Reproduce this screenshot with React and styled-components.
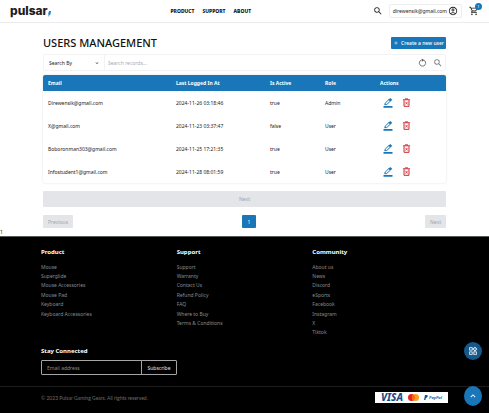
import React, { useState } from "react";
import styled, { createGlobalStyle } from "styled-components";
import {
  MdSearch,
  MdOutlineAccountCircle,
  MdOutlineShoppingCart,
  MdAdd,
  MdKeyboardArrowDown,
  MdKeyboardArrowUp,
  MdOutlineWidgets,
} from "react-icons/md";

const blue = "#1976b8";

const GlobalStyle = createGlobalStyle`
  *, *::before, *::after { box-sizing: border-box; }
  body {
    margin: 0;
    background: #fff;
    color: #222;
    font-family: "Noto Sans", "Open Sans", sans-serif;
    font-size: 5px;
    line-height: 8px;
  }
  button, input, select { font: inherit; color: inherit; margin: 0; }
  button { cursor: pointer; }
  a { color: inherit; text-decoration: none; }
`;

const Header = styled.header`
  display: grid;
  grid-template-columns: 34% auto 1fr;
  align-items: center;
  height: 23px;
  padding: 0 10px;
  border-bottom: 1px solid #ececee;
`;

const Logo = styled.a`
  display: flex;
  align-items: center;
  color: #231c1e;
  font-family: Inter, sans-serif;
  font-size: 12px;
  font-weight: 800;
  line-height: 20px;

  svg { width: 3px; height: 6px; margin-top: 5px; }
`;

const Nav = styled.nav`
  display: flex;
  gap: 8px;
  padding-left: 1px;
  color: #111;
  font-weight: 800;
`;

const HeaderTools = styled.div`
  display: flex;
  align-items: center;
  justify-content: flex-end;
  color: #222;
`;

const IconButton = styled.button`
  display: flex;
  align-items: center;
  justify-content: center;
  position: relative;
  padding: 0;
  border: 0;
  background: none;
  color: ${(p) => p.$color || "#222"};

  svg { width: ${(p) => p.$size || 10}px; height: ${(p) => p.$size || 10}px; }
`;

const Account = styled.button`
  display: flex;
  align-items: center;
  gap: 1px;
  height: 14px;
  margin: 0 7px 0 6px;
  padding: 0 3px;
  border: 1px solid #eeeef0;
  border-radius: 2px;
  background: #fff;

  svg { width: 10px; height: 10px; }
`;

const Badge = styled.span`
  position: absolute;
  top: -3px;
  right: -3px;
  width: 7px;
  height: 7px;
  border-radius: 50%;
  background: ${blue};
  color: #fff;
  font-size: 4px;
  line-height: 7px;
  text-align: center;
`;

const Main = styled.main`
  padding: 14px 43px 8px;
`;

const TitleRow = styled.div`
  display: flex;
  align-items: center;
  justify-content: space-between;
  height: 12px;
`;

const Title = styled.h1`
  margin: 0;
  color: #111;
  font-size: 11px;
  font-weight: 500;
  line-height: 14px;
`;

const CreateButton = styled.button`
  display: flex;
  align-items: center;
  gap: 2px;
  height: 12px;
  padding: 0 2px;
  border: 0;
  border-radius: 1px;
  background: ${blue};
  color: #fff;
  font-weight: 500;

  svg { width: 6px; height: 6px; }
`;

const SearchBar = styled.form`
  display: flex;
  align-items: center;
  height: 17px;
  margin: 5px 0 4px;
  border: 1px solid #f3f3f5;
  border-radius: 2px;
`;

const SelectBox = styled.div`
  display: flex;
  align-items: center;
  width: 61px;
  height: 100%;
  padding: 0 4px 0 5px;
  border-right: 1px solid #f3f3f5;

  svg { width: 6px; height: 6px; flex: none; }
`;

const Select = styled.select`
  flex: 1;
  min-width: 0;
  padding: 0;
  border: 0;
  background: none;
  appearance: none;
`;

const SearchInput = styled.input`
  flex: 1;
  min-width: 0;
  padding: 0 3px;
  border: 0;
  background: none;

  &::placeholder { color: #a9acb3; opacity: 1; }
`;

const SearchActions = styled.div`
  display: flex;
  gap: 6px;
  padding-right: 2px;
`;

const TableCard = styled.div`
  border-radius: 2px;
  box-shadow: 0 0 2px rgba(0, 0, 0, 0.16);
  overflow: hidden;
`;

const Table = styled.table`
  width: 100%;
  border-collapse: collapse;
  table-layout: fixed;
`;

const HeadCell = styled.th`
  width: ${(p) => p.$width};
  height: 16px;
  padding: 0 0 0 5px;
  background: ${blue};
  color: #fff;
  font-weight: 700;
  text-align: left;
`;

const Cell = styled.td`
  height: 23px;
  padding: 0 0 0 5px;
`;

const RowActions = styled.div`
  display: flex;
  gap: 9px;
  padding-left: 3px;
`;

const NextBar = styled.button`
  display: block;
  width: 100%;
  height: 16px;
  margin: 8px 0;
  border: 0;
  border-radius: 1px;
  background: #e4e5e9;
  color: #a2a4aa;
`;

const Pagination = styled.nav`
  display: flex;
  justify-content: space-between;
`;

const PageButton = styled.button`
  min-width: 14px;
  height: 13px;
  padding: 0 5px;
  border: 0;
  border-radius: 1px;
  background: ${(p) => (p.$current ? blue : "#e4e5e9")};
  color: ${(p) => (p.$current ? "#fff" : "#a2a4aa")};
`;

const PageCount = styled.p`
  margin: -8px 0 0;
`;

const Footer = styled.footer`
  border-top: 1px solid #555b58;
  background: #000;
  color: #8b8b8b;
`;

const FooterTop = styled.div`
  padding: 11px 41px 10px;
  border-bottom: 1px solid #1c1c1c;
`;

const LinkColumns = styled.div`
  display: grid;
  grid-template-columns: repeat(3, 1fr);
  margin-bottom: 10px;
`;

const FooterHeading = styled.h2`
  margin: 0;
  color: #fff;
  font-size: 6px;
  font-weight: 700;
  line-height: 9px;
`;

const LinkList = styled.ul`
  display: grid;
  grid-template-rows: repeat(8, 1fr);
  align-items: center;
  height: 75px;
  margin: 5px 0 0;
  padding: 0;
  list-style: none;
`;

const Newsletter = styled.form`
  display: flex;
  width: 33%;
  min-width: 136px;
  height: 15px;
  margin-top: 4px;
  margin-bottom: 1px;
  border: 1px solid #a5a5a5;
  border-radius: 1px;
`;

const EmailInput = styled.input`
  flex: 1;
  min-width: 0;
  padding: 0 5px;
  border: 0;
  background: none;

  &::placeholder { color: #8b8b8b; opacity: 1; }
`;

const Subscribe = styled.button`
  width: 35px;
  padding: 0;
  border: 0;
  border-left: 1px solid #a5a5a5;
  background: none;
  color: #e4e4e4;
`;

const FooterBottom = styled.div`
  display: flex;
  align-items: center;
  justify-content: space-between;
  height: 26px;
  padding: 0 41px 5px;
  color: #6d6d6d;
`;

const Copyright = styled.small`
  font-family: Lato, sans-serif;
  font-size: 5px;
`;

const Payments = styled.div`
  display: flex;
  align-items: center;
  justify-content: center;
  gap: 5px;
  width: 73px;
  height: 11px;
  background: #fff;
`;

const Visa = styled.span`
  color: #174a87;
  font-size: 10px;
  font-style: italic;
  font-weight: 800;
  line-height: 11px;
`;

const PayPal = styled.span`
  display: flex;
  align-items: center;
  gap: 1px;
  color: #1678b5;
  font-size: 4px;
  font-style: italic;
  font-weight: 800;

  svg { width: 4px; height: 5px; }
`;

const FloatingButton = styled.button`
  position: fixed;
  right: 7px;
  bottom: ${(p) => p.$bottom}px;
  display: flex;
  align-items: center;
  justify-content: center;
  width: 18px;
  height: ${(p) => p.$height}px;
  padding: 0;
  border: 0;
  border-radius: 50%;
  background: ${(p) => p.$background};
  color: #fff;

  svg { width: 10px; height: 10px; }
`;

const ResetIcon = () => (
  <svg viewBox="0 0 20 20" aria-hidden="true">
    <path d="M12.500 4.500a7 7 0 1 1-5 0" fill="none" stroke="currentColor" strokeWidth="1.8" />
    <path d="M8.500 1v7.500l5-3.700Z" fill="currentColor" />
  </svg>
);

const EditIcon = () => (
  <svg viewBox="0 0 20 20" aria-hidden="true">
    <path d="M3.500 13.500 4.500 10 12 3l3 3-7.500 7Z" fill="none" stroke="currentColor" strokeWidth="2" />
    <path d="m11 3.500 3.500-3.500L18.500 3.500 15 7Z" fill="currentColor" />
    <path d="M1 16h18v3.500H1Z" fill="currentColor" />
  </svg>
);

const DeleteIcon = () => (
  <svg viewBox="0 0 20 20" aria-hidden="true">
    <path d="M2 4h16M6.500 2h7M4.500 5v13.500h11V5" fill="none" stroke="currentColor" strokeWidth="2.2" />
    <path d="m7.500 8.500 5 6m0-6-5 6" fill="none" stroke="currentColor" strokeWidth="1.8" />
  </svg>
);

const columns = [
  ["Email", "auto"],
  ["Last Logged In At", "94px"],
  ["Is Active", "55px"],
  ["Role", "55px"],
  ["Actions", "71px"],
];

const users = [
  ["Direwensik@gmail.com", "2024-11-26 03:18:46", "true", "Admin"],
  ["X@gmail.com", "2024-11-23 03:37:47", "false", "User"],
  ["Boboronman303@gmail.com", "2024-11-25 17:21:35", "true", "User"],
  ["Infostudent1@gmail.com", "2024-11-28 08:01:59", "true", "User"],
];

const footerLinks = [
  ["Product", ["Mouse", "Superglide", "Mouse Accessories", "Mouse Pad", "Keyboard", "Keyboard Accessories"]],
  ["Support", ["Support", "Warranty", "Contact Us", "Refund Policy", "FAQ", "Where to Buy", "Terms & Conditions"]],
  ["Community", ["About us", "News", "Discord", "eSports", "Facebook", "Instagram", "X", "Tiktok"]],
];

export default function App() {
  const [query, setQuery] = useState("");
  const [email, setEmail] = useState("");
  const stop = (e) => e.preventDefault();

  return (
    <>
      <GlobalStyle />
      <Header>
        <Logo href="#" aria-label="Pulsar home">
          pulsar
          <svg viewBox="0 0 3 6" aria-hidden="true">
            <path d="M1 0h2L2.6 3 0 6 .8 3.5H0Z" fill="#1b87cf" />
          </svg>
        </Logo>
        <Nav aria-label="Main">
          <a href="#product">PRODUCT</a>
          <a href="#support">SUPPORT</a>
          <a href="#about">ABOUT</a>
        </Nav>
        <HeaderTools>
          <IconButton type="button" aria-label="Search"><MdSearch /></IconButton>
          <Account type="button">
            direwensik@gmail.com
            <MdOutlineAccountCircle />
          </Account>
          <IconButton type="button" aria-label="Cart">
            <MdOutlineShoppingCart />
            <Badge>1</Badge>
          </IconButton>
        </HeaderTools>
      </Header>

      <Main>
        <TitleRow>
          <Title>USERS MANAGEMENT</Title>
          <CreateButton type="button"><MdAdd />Create a new user</CreateButton>
        </TitleRow>
        <SearchBar role="search" onSubmit={stop}>
          <SelectBox>
            <Select aria-label="Search By" defaultValue="">
              <option value="">Search By</option>
              <option value="email">Email</option>
              <option value="role">Role</option>
            </Select>
            <MdKeyboardArrowDown />
          </SelectBox>
          <SearchInput
            aria-label="Search records"
            placeholder="Search records..."
            value={query}
            onChange={(e) => setQuery(e.target.value)}
          />
          <SearchActions>
            <IconButton type="reset" aria-label="Reset" $color="#555" $size={9} onClick={() => setQuery("")}><ResetIcon /></IconButton>
            <IconButton type="submit" aria-label="Search records" $color="#777"><MdSearch /></IconButton>
          </SearchActions>
        </SearchBar>

        <TableCard>
          <Table>
            <thead>
              <tr>
                {columns.map(([label, width]) => (
                  <HeadCell key={label} scope="col" $width={width}>{label}</HeadCell>
                ))}
              </tr>
            </thead>
            <tbody>
              {users.map((user) => (
                <tr key={user[0]}>
                  {user.map((value, i) => <Cell key={i}>{value}</Cell>)}
                  <Cell>
                    <RowActions>
                      <IconButton type="button" aria-label={`Edit ${user[0]}`} $color={blue}><EditIcon /></IconButton>
                      <IconButton type="button" aria-label={`Delete ${user[0]}`} $color="#cf2630" $size={9}><DeleteIcon /></IconButton>
                    </RowActions>
                  </Cell>
                </tr>
              ))}
            </tbody>
          </Table>
        </TableCard>

        <NextBar type="button" disabled>Next</NextBar>
        <Pagination aria-label="Pages">
          <PageButton type="button" disabled>Previous</PageButton>
          <PageButton type="button" $current aria-current="page">1</PageButton>
          <PageButton type="button" disabled>Next</PageButton>
        </Pagination>
      </Main>
      <PageCount>1</PageCount>

      <Footer>
        <FooterTop>
          <LinkColumns>
            {footerLinks.map(([heading, links]) => (
              <section key={heading}>
                <FooterHeading>{heading}</FooterHeading>
                <LinkList>
                  {links.map((link) => <li key={link}><a href="#footer">{link}</a></li>)}
                </LinkList>
              </section>
            ))}
          </LinkColumns>
          <FooterHeading>Stay Connected</FooterHeading>
          <Newsletter onSubmit={stop}>
            <EmailInput
              type="email"
              aria-label="Email address"
              placeholder="Email address"
              value={email}
              onChange={(e) => setEmail(e.target.value)}
            />
            <Subscribe type="submit">Subscribe</Subscribe>
          </Newsletter>
        </FooterTop>
        <FooterBottom>
          <Copyright>© 2023 Pulsar Gaming Gears. All rights reserved.</Copyright>
          <Payments>
            <Visa>VISA</Visa>
            <svg width="11" height="7" viewBox="0 0 11 7" role="img" aria-label="Mastercard">
              <circle cx="3.5" cy="3.5" r="3.5" fill="#e8202a" />
              <circle cx="7.5" cy="3.5" r="3.5" fill="#f79e1b" />
              <path d="M5.5.7a3.5 3.5 0 0 1 0 5.6 3.5 3.5 0 0 1 0-5.6Z" fill="#ff5f00" />
            </svg>
            <PayPal>
              <svg viewBox="0 0 4 5" aria-hidden="true">
                <path d="M1 0h2q1 .4.7 1.6Q3.300 3 1.800 3L1.400 5H0Z" fill="#15558f" />
              </svg>
              PayPal
            </PayPal>
          </Payments>
        </FooterBottom>
      </Footer>

      <FloatingButton type="button" aria-label="Open widgets" $bottom={53} $height={18} $background="#15598a">
        <MdOutlineWidgets />
      </FloatingButton>
      <FloatingButton type="button" aria-label="Back to top" $bottom={7} $height={20} $background={blue}>
        <MdKeyboardArrowUp />
      </FloatingButton>
    </>
  );
}
